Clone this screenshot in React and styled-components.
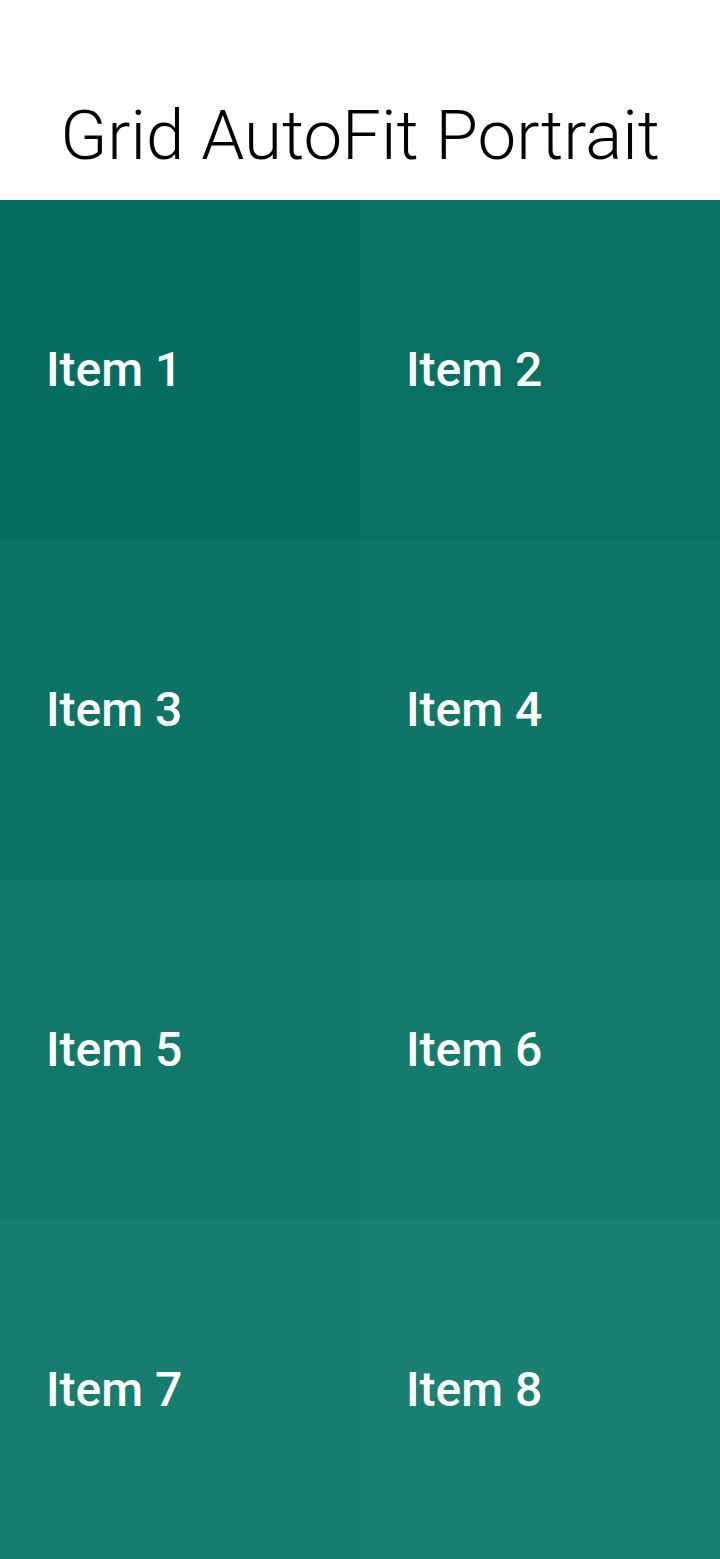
import React from "react";
import styled, { createGlobalStyle } from "styled-components";

const GlobalStyle = createGlobalStyle`
  html, body {
    margin: 0;
    padding: 0;
    background: #ffffff;
  }
  #root {
    min-height: 100vh;
  }
`;

const items = [1, 2, 3, 4, 5, 6, 7, 8];

// shade each cell a little lighter than the one before it
const shade = (i) => {
  const t = i / (items.length - 1);
  const r = Math.round(6 + (26 - 6) * t);
  const g = Math.round(110 + (128 - 110) * t);
  const b = Math.round(96 + (114 - 96) * t);
  return `rgb(${r}, ${g}, ${b})`;
};

export default function App() {
  return (
    <Page>
      <GlobalStyle />
      <Header>
        <Title>Grid AutoFit Portrait</Title>
      </Header>
      <Grid>
        {items.map((n, i) => (
          <Cell key={n} $bg={shade(i)}>
            <Label>Item {n}</Label>
          </Cell>
        ))}
      </Grid>
    </Page>
  );
}

const Page = styled.div`
  display: flex;
  flex-direction: column;
  width: 720px;
  height: 1559px;
  font-family: Roboto, "Liberation Sans", sans-serif;
`;

const Header = styled.div`
  height: 200px;
  display: flex;
  align-items: center;
  justify-content: center;
  padding-top: 70px;
  box-sizing: border-box;
`;

const Title = styled.h1`
  margin: 0;
  font-size: 69px;
  font-weight: 300;
  color: #000;
  line-height: 1;
`;

const Grid = styled.div`
  flex: 1;
  display: grid;
  grid-template-columns: repeat(auto-fit, minmax(300px, 1fr));
  grid-auto-rows: 1fr;
`;

const Cell = styled.div`
  display: flex;
  align-items: center;
  padding-left: 46px;
  background: ${(p) => p.$bg};
`;

const Label = styled.span`
  color: #ffffff;
  font-size: 48px;
  font-weight: 500;
`;
